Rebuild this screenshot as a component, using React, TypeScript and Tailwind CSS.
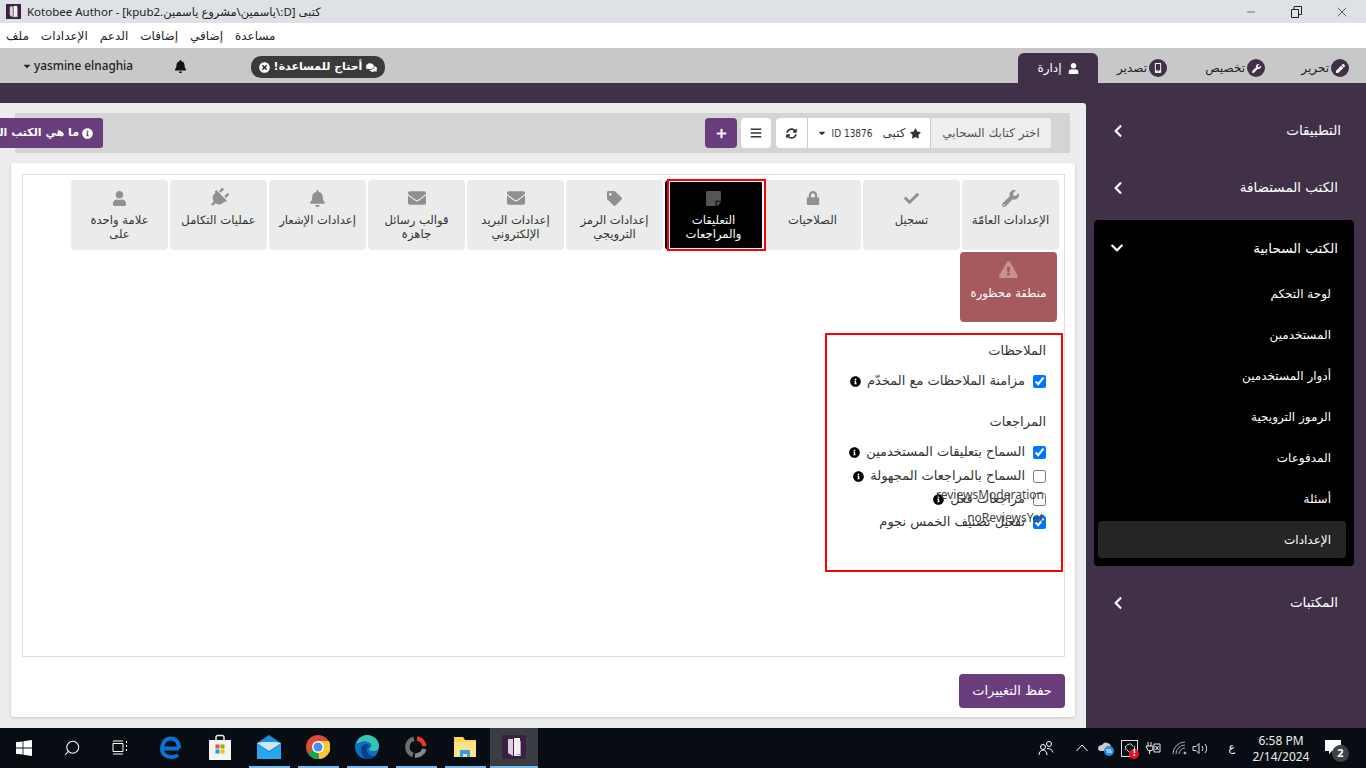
import {
  FaBars,
  FaBell,
  FaCaretDown,
  FaCheck,
  FaChevronDown,
  FaChevronLeft,
  FaComments,
  FaEnvelope,
  FaExclamationTriangle,
  FaInfoCircle,
  FaLock,
  FaMobileAlt,
  FaPen,
  FaPlug,
  FaPlus,
  FaStar,
  FaStickyNote,
  FaSyncAlt,
  FaTag,
  FaTimesCircle,
  FaUser,
  FaWrench,
} from "react-icons/fa"
import { Minus, Search, X } from "lucide-react"
import type { ReactNode } from "react"

const MENU = ["ملف", "الإعدادات", "الدعم", "إضافات", "إضافي", "مساعدة"]

const TILES: Array<{ label: ReactNode; icon: ReactNode; active?: boolean }> = [
  { label: "الإعدادات العامّة", icon: <FaWrench size={17} /> },
  { label: "تسجيل", icon: <FaCheck size={15} /> },
  { label: "الصلاحيات", icon: <FaLock size={14} /> },
  { label: "التعليقات والمراجعات", icon: <FaStickyNote size={17} />, active: true },
  { label: "إعدادات الرمز الترويجي", icon: <FaTag size={15} /> },
  { label: "إعدادات البريد الإلكتروني", icon: <FaEnvelope size={18} /> },
  { label: "قوالب رسائل جاهزة", icon: <FaEnvelope size={18} /> },
  { label: "إعدادات الإشعار", icon: <FaBell size={17} /> },
  { label: "عمليات التكامل", icon: <FaPlug size={20} className="rotate-45" /> },
  {
    label: (
      <>
        علامة واحدة
        <br />
        على
      </>
    ),
    icon: <FaUser size={15} />,
  },
]

const SUB_ITEMS = ["لوحة التحكم", "المستخدمين", "أدوار المستخدمين", "الرموز الترويجية", "المدفوعات", "أسئلة"]

function KotobeeIcon({ size }: { size: number }) {
  return (
    <svg width={size} height={size} viewBox="0 0 24 24">
      <rect width="24" height="24" fill="#3d1f45" />
      <path d="M6 4h5v17l-5-3z" fill="#d9d3dc" />
      <path d="M12 3h6v18h-6z" fill="#f3f0f4" />
      <path d="M13 19l6 2V6h-1v13z" fill="#a99bb0" />
    </svg>
  )
}

function TabIcon({ children }: { children: ReactNode }) {
  return (
    <span className="flex h-[18px] w-[18px] items-center justify-center rounded-full bg-[#403149] text-white">
      {children}
    </span>
  )
}

function HeaderTab({ label, icon }: { label: string; icon: ReactNode }) {
  return (
    <div className="flex items-center gap-[2px] text-[12px] text-[#222]">
      {icon}
      <span>{label}</span>
    </div>
  )
}

function Tile({ label, icon, active }: { label: ReactNode; icon: ReactNode; active?: boolean }) {
  return (
    <div
      className={`relative flex h-[70px] w-[97px] shrink-0 flex-col items-center rounded-[4px] px-1 pt-[8px] text-center ${
        active ? "bg-black text-white" : "bg-[#ebebeb] text-[#333]"
      }`}
    >
      {active && (
        <div className="absolute -top-[1px] -bottom-[1px] right-[-4px] left-[2px] border-2 border-[#f00] shadow-[inset_0_0_0_1px_#fff]" />
      )}
      <div className={`relative flex h-[20px] items-center ${active ? "text-[#555]" : "text-[#909090]"}`}>{icon}</div>
      <div className="relative mt-[5px] text-[11.6px] leading-[14px]">{label}</div>
    </div>
  )
}

function CheckRow({
  label,
  checked,
  info = true,
  overlay,
}: {
  label: string
  checked?: boolean
  info?: boolean
  overlay?: string
}) {
  return (
    <div className="relative flex h-[16px] items-center gap-[8px]">
      <input type="checkbox" defaultChecked={checked} className="m-0 h-[13px] w-[13px] shrink-0" />
      <span className="text-[13px] whitespace-nowrap text-[#333]">{label}</span>
      {info && <FaInfoCircle size={11} className="-mr-[2px] shrink-0 text-black" />}
      {overlay && (
        <span className="absolute top-[-3px] right-[2px] font-['Noto_Sans'] text-[12px] leading-[14px] text-[#444]">
          {overlay}
        </span>
      )}
    </div>
  )
}

function NavRow({ label, inset = "pr-[28px]" }: { label: string; inset?: string }) {
  return (
    <div className={`flex h-[57px] items-center justify-between pl-[25px] text-[13.5px] text-white ${inset}`}>
      <span>{label}</span>
      <FaChevronLeft size={14} />
    </div>
  )
}

function TaskItem({ children, running }: { children: ReactNode; running?: boolean }) {
  return (
    <div className="flex h-full w-[49px] items-center justify-center pr-[1px]">
      <div
        className={`flex h-full w-[41px] items-center justify-center border-b-2 ${
          running ? "border-[#76b9ed]" : "border-transparent"
        }`}
      >
        {children}
      </div>
    </div>
  )
}

function Taskbar() {
  return (
    <div className="flex h-[40px] shrink-0 items-center bg-[#080c13] text-white">
      <div className="flex h-full w-[48px] items-center justify-center">
        <svg width="16" height="16" viewBox="0 0 16 16" fill="#fff">
          <path d="M0 2.3l6.6-.9v6.2H0zM7.400 1.300L16 0v7.600H7.400zM0 8.400h6.600v6.200L0 13.700zM7.400 8.400H16V16l-8.600-1.200z" />
        </svg>
      </div>
      <div className="flex h-full w-[48px] items-center justify-center">
        <Search size={18} strokeWidth={1.4} className="-scale-x-100" />
      </div>
      <div className="flex h-full w-[48px] items-center justify-center">
        <svg width="16" height="16" viewBox="0 0 16 16" fill="none" stroke="#fff" strokeWidth="1">
          <path d="M1 3.500h10v8H1zM1 1h10M1 14h10M14.500 1v2M14.500 5v2M14.500 9v2" />
        </svg>
      </div>
      <div className="w-[3px]" />
      <TaskItem>
        <svg width="22" height="24" viewBox="0 0 22 24" fill="none">
          <path
            d="M2 13.500h17M19 13.500C19 7 15.500 3.500 10.500 3.500S2 8 2 13.500 6 22 11 22c3 0 5.500-.8 7-2"
            stroke="#0a74d6"
            strokeWidth="4"
          />
        </svg>
      </TaskItem>
      <TaskItem>
        <svg width="24" height="26" viewBox="0 0 24 26">
          <path d="M8 7V3.500C8 2 9 1.500 10 1.500h4c1 0 2 .5 2 2V7" fill="none" stroke="#e8e8e8" strokeWidth="1.500" />
          <path d="M1 6h22v20H1z" fill="#f4f4f4" />
          <path d="M7.500 10.500h4v4h-4z" fill="#f25022" />
          <path d="M12.500 10.500h4v4h-4z" fill="#7fba00" />
          <path d="M7.500 15.500h4v4h-4z" fill="#00a4ef" />
          <path d="M12.500 15.500h4v4h-4z" fill="#ffb900" />
        </svg>
      </TaskItem>
      <TaskItem running>
        <svg width="24" height="24" viewBox="0 0 24 24">
          <path d="M0 8L12 0l12 8v16H0z" fill="#1b8fe0" />
          <path d="M0 8l12 8 12-8-6-1H6z" fill="#cfe9fa" />
          <path d="M0 9l12 9 12-9v15H0z" fill="#29a7ee" />
        </svg>
      </TaskItem>
      <TaskItem running>
        <svg width="24" height="24" viewBox="0 0 24 24">
          <circle cx="12" cy="12" r="12" fill="#dd4b39" />
          <path d="M12 12l-10.400 6A12 12 0 0 0 13 24z" fill="#1fa349" />
          <path d="M12 6h10.900A12 12 0 0 1 13 24z" fill="#fcc934" />
          <circle cx="12" cy="12" r="6" fill="#fff" />
          <circle cx="12" cy="12" r="4.500" fill="#4a8df5" />
        </svg>
      </TaskItem>
      <TaskItem running>
        <svg width="24" height="24" viewBox="0 0 24 24">
          <circle cx="12" cy="12" r="12" fill="#0f6fc4" />
          <path d="M1 9C3 3 8 0 12 0c7 0 12 5 12 11 0 4-3 5-6 5-2 0-4-1-4-2 2-1 3-3 2-5-2-3-8-4-12-1-1 0-2 0-3 1z" fill="#36c6b0" />
          <path d="M6 14c0-3 3-5 6-5 1 0 2 1 2 3 0 0-2 0-2 3 0 3 3 6 7 6-2 2-4 3-7 3-3 0-6-4-6-10z" fill="#0a3f8c" />
        </svg>
      </TaskItem>
      <TaskItem running>
        <svg width="24" height="24" viewBox="0 0 24 24" fill="none" strokeWidth="4.500">
          <path d="M10 3.700A8.500 8.500 0 0 0 9 20" stroke="#6f6f6f" />
          <path d="M11 20.400A8.500 8.500 0 0 0 20.300 14" stroke="#8a8a8a" />
          <path d="M13 3.600A8.500 8.500 0 0 1 20.400 11" stroke="#e8392b" />
        </svg>
      </TaskItem>
      <TaskItem running>
        <svg width="24" height="22" viewBox="0 0 24 22">
          <path d="M1 1h9l2 3h11v17H1z" fill="#fbd55c" />
          <path d="M1 6h22v15H1z" fill="#fee28a" />
          <path d="M7 14h10v7h-3v-3h-4v3H7z" fill="#2f9fe6" />
        </svg>
      </TaskItem>
      <div className="flex h-full w-[48px] items-center justify-center border-b-2 border-[#76b9ed] bg-[#3a3d42]">
        <KotobeeIcon size={24} />
      </div>

      <div className="flex-1" />

      <div className="flex h-full items-center">
        <svg width="16" height="16" viewBox="0 0 16 16" fill="none" stroke="#fff" className="mr-[22px]">
          <circle cx="5" cy="7" r="2.500" />
          <circle cx="11" cy="4" r="2.500" />
          <path d="M1 15c0-3 2-5 4-5s4 2 4 5M9 8.500c3 0 5 1 6 4" />
        </svg>
        <svg width="12" height="8" viewBox="0 0 12 8" fill="none" stroke="#fff" className="mr-[9px]">
          <path d="M.5 7L6 1l5.500 6" />
        </svg>
        <svg width="18" height="16" viewBox="0 0 18 16" className="mr-[6px]">
          <path d="M1 9a4 4 0 0 1 4-4 5 5 0 0 1 9 1v5H3a3 3 0 0 1-2-2z" fill="#c9ccd1" />
          <circle cx="12" cy="11" r="5" fill="#2f8de0" />
          <path d="M9 10h5M15 12h-5" stroke="#fff" />
        </svg>
        <div className="relative mr-[7px] flex h-[17px] w-[17px] items-center justify-center border border-[#ddd]">
          <svg width="10" height="10" viewBox="0 0 10 10" fill="none" stroke="#ddd">
            <path d="M1 7a4 4 0 0 1 7-4M9 3a4 4 0 0 1-7 4" />
          </svg>
          <div className="absolute right-[-2px] bottom-[-3px] flex h-[10px] w-[10px] items-center justify-center rounded-full bg-[#e81123] text-[8px] leading-none font-bold text-white">
            !
          </div>
        </div>
        <svg width="16" height="12" viewBox="0 0 16 12" fill="none" stroke="#eee" className="mr-[11px]">
          <path d="M3 0v4M6 0v4M1 4h7v2a3 3 0 0 1-6 0zM4.500 9v3M9 2h6v8H9zM10.500 4l3 4M13.500 4l-3 4" />
        </svg>
        <svg width="16" height="14" viewBox="0 0 16 14" fill="none" stroke="#aaa" className="mr-[4px]">
          <path d="M1 13A12 12 0 0 1 13 1M4 13a9 9 0 0 1 9-9M7 13a6 6 0 0 1 6-6" />
          <circle cx="13" cy="12" r="1" fill="#fff" />
        </svg>
        <svg width="17" height="13" viewBox="0 0 17 13" fill="none" stroke="#ddd" className="mr-[19px]">
          <path d="M1 4.500h3l3-3v10l-3-3H1zM10 4a4 4 0 0 1 0 5M13 2a7 7 0 0 1 0 9" />
        </svg>
        <span className="mr-[17px] font-['DejaVu_Sans'] text-[11px]">ع</span>
        <div className="mt-[1px] mr-[15px] w-[58px] text-center font-['Noto_Sans'] text-[12px] leading-[16px] whitespace-nowrap text-[#eee]">
          <div>6:58 PM</div>
          <div>2/14/2024</div>
        </div>
        <div className="relative mr-[25px] h-[16px] w-[16px]">
          <svg width="16" height="16" viewBox="0 0 16 16" fill="#fff">
            <path d="M0 0h16v11H7l-3 3v-3H0z" />
          </svg>
          <div className="absolute top-[5px] left-[7px] flex h-[17px] w-[17px] items-center justify-center rounded-full bg-[#404245] font-['Noto_Sans'] text-[11px] font-bold text-white">
            2
          </div>
        </div>
      </div>
    </div>
  )
}

export default function App() {
  return (
    <div className="flex h-[768px] w-[1366px] flex-col overflow-hidden bg-[#403149] font-['DejaVu_Sans',sans-serif]">
      {/* window chrome */}
      <div className="flex h-[23px] shrink-0 items-center bg-[#dee1e6] pl-[6px] text-[#222]">
        <KotobeeIcon size={15} />
        <span dir="rtl" className="ml-[6px] font-['Noto_Sans','DejaVu_Sans',sans-serif] text-[11.5px]">
          كتبى [D:\ياسمين\مشروع ياسمين.kpub2] - Kotobee Author
        </span>
        <div className="flex-1" />
        <Minus size={12} strokeWidth={1.2} className="mr-[34px]" />
        <svg width="11" height="12" viewBox="0 0 11 12" fill="none" stroke="#222" className="mr-[32px]">
          <path d="M.5 3.500h7v8h-7zM3 3.500v-3h7.500v8h-3" />
        </svg>
        <X size={16} strokeWidth={1} className="mr-[16px]" />
      </div>
      <div className="flex h-[25px] shrink-0 items-center gap-[12px] bg-white pl-[6px] font-['Noto_Sans','DejaVu_Sans',sans-serif] text-[12px] text-[#222]">
        {MENU.map((item) => (
          <span key={item} dir="rtl">
            {item}
          </span>
        ))}
      </div>

      {/* app header */}
      <div className="flex h-[35px] shrink-0 items-center bg-[#c8c8c8] pl-[22px]">
        <div className="flex w-[111px] items-center gap-[2px] text-[#222]">
          <FaCaretDown size={10} className="shrink-0" />
          <span className="font-['Noto_Sans'] text-[11.8px] font-medium whitespace-nowrap">yasmine elnaghia</span>
        </div>
        <FaBell size={13} className="mt-[1px] ml-[41px] text-[#111]" />
        <div className="mt-[3px] ml-[64px] flex h-[22px] w-[134px] items-center justify-center gap-[4px] rounded-[10px] bg-[#3a3a3a] text-[11px] font-bold text-white">
          <FaTimesCircle size={11} />
          <span dir="rtl">أحتاج للمساعدة!</span>
          <FaComments size={11} />
        </div>
        <div className="flex-1" />
        <div dir="rtl" className="flex h-full items-end">
          <div className="mr-[17px] flex h-[30px] w-[47px] items-center">
            <HeaderTab label="تحرير" icon={<TabIcon><FaPen size={9} /></TabIcon>} />
          </div>
          <div className="mr-[37px] flex h-[30px] w-[61px] items-center">
            <HeaderTab label="تخصيص" icon={<TabIcon><FaWrench size={9} /></TabIcon>} />
          </div>
          <div className="mr-[37px] flex h-[30px] w-[49px] items-center">
            <HeaderTab label="تصدير" icon={<TabIcon><FaMobileAlt size={10} /></TabIcon>} />
          </div>
          <div className="mr-[20px] flex h-[30px] w-[80px] items-center justify-center gap-[6px] rounded-t-[6px] bg-[#403149] text-[12px] text-white">
            <FaUser size={11} />
            <span>إدارة</span>
          </div>
        </div>
      </div>

      {/* body */}
      <div className="flex min-h-0 flex-1">
        <div className="mt-[20px] flex w-[1086px] shrink-0 flex-col rounded-tr-[3px] bg-[#ededed] pt-[10px]">
          <div className="mr-[16px] ml-[15px] flex h-[40px] shrink-0 items-center bg-[#d4d4d4] pr-[19px]" dir="rtl">
            <div className="flex h-[30px] w-[275px] overflow-hidden rounded-[4px] bg-white text-[12px] text-[#333]">
              <div className="flex w-[121px] items-center justify-center border-l border-[#ccc] bg-[#eeeeee] whitespace-nowrap text-[#555]">
                اختر كتابك السحابي
              </div>
              <div className="flex w-[123px] items-center justify-center gap-[4px] border-l border-[#ccc]">
                <FaStar size={11} />
                <span className="ml-[6px]">كتبى</span>
                <span dir="ltr" className="font-['DejaVu_Sans_Condensed','DejaVu_Sans'] text-[10px]">
                  ID 13876
                </span>
                <FaCaretDown size={10} />
              </div>
              <div className="flex flex-1 items-center justify-center">
                <FaSyncAlt size={11} />
              </div>
            </div>
            <div className="mr-[5px] flex h-[30px] w-[30px] items-center justify-center rounded-[4px] bg-white text-[#333]">
              <FaBars size={12} />
            </div>
            <div className="mr-[4px] flex h-[30px] w-[32px] items-center justify-center rounded-[4px] bg-[#6a3e7c] text-white">
              <FaPlus size={11} />
            </div>
            <div className="flex-1" />
            <div className="-ml-[52px] flex h-[30px] w-[140px] shrink-0 items-center gap-[3px] overflow-hidden rounded-[3px] bg-[#6a3e7c] pr-[10px] text-[11px] font-bold whitespace-nowrap text-white">
              <FaInfoCircle size={11} className="shrink-0" />
              <span>ما هي الكتب السحابية؟</span>
            </div>
          </div>

          <div className="mt-[10px] mr-[11px] ml-[11px] flex flex-1 flex-col rounded-[3px] bg-white pt-[11px] pr-[10px] pl-[11px] shadow-[0_1px_3px_rgba(0,0,0,0.18)]">
            <div dir="rtl" className="h-[483px] shrink-0 border border-[#dcdcdc] pt-[5px] pr-[5px]">
              <div className="flex gap-[2px]">
                {TILES.map((tile, i) => (
                  <Tile key={i} label={tile.label} icon={tile.icon} active={tile.active} />
                ))}
              </div>
              <div className="mt-[2px] mr-[2px] flex h-[70px] w-[97px] flex-col items-center rounded-[4px] bg-[#a65a5e] pt-[8px] text-white">
                <FaExclamationTriangle size={19} className="text-[#c98f92]" />
                <div className="mt-[6px] text-[11.6px]">منطقة محظورة</div>
              </div>
              <div className="mt-[11px] -mr-[4px] h-[239px] w-[238px] border-2 border-[#f00] pt-[8px] pr-[15px]">
                <div className="h-[16px] text-[13px] leading-[16px] text-[#333]">الملاحظات</div>
                <div className="mt-[14px]">
                  <CheckRow label="مزامنة الملاحظات مع المخدّم" checked />
                </div>
                <div className="mt-[25px] h-[16px] text-[13px] leading-[16px] text-[#333]">المراجعات</div>
                <div className="mt-[14px]">
                  <CheckRow label="السماح بتعليقات المستخدمين" checked />
                </div>
                <div className="mt-[8px]">
                  <CheckRow label="السماح بالمراجعات المجهولة" />
                </div>
                <div className="mt-[7px]">
                  <CheckRow label="مراجعات فعل" overlay="reviewsModeration" />
                </div>
                <div className="mt-[7px]">
                  <CheckRow label="تفعيل تصنيف الخمس نجوم" checked info={false} overlay="noReviewsYet" />
                </div>
              </div>
            </div>
            <div dir="rtl" className="mt-[17px] flex">
              <div className="flex h-[34px] w-[106px] items-center justify-center rounded-[4px] bg-[#6a3e7c] text-[13px] text-white">
                حفظ التغييرات
              </div>
            </div>
          </div>
          <div className="h-[11px] shrink-0" />
        </div>

        {/* sidebar */}
        <div dir="rtl" className="flex-1 pt-[19px]">
          <NavRow label="التطبيقات" inset="pr-[25px]" />
          <NavRow label="الكتب المستضافة" />
          <div className="mt-[4px] mr-[12px] ml-[8px] h-[346px] rounded-[4px] bg-black text-white">
            <div className="flex h-[56px] items-center justify-between pr-[16px] pl-[16px] text-[13.5px]">
              <span>الكتب السحابية</span>
              <FaChevronDown size={14} />
            </div>
            <div className="-mt-[3px]">
              {SUB_ITEMS.map((item) => (
                <div key={item} className="flex h-[41px] items-center pr-[23px] text-[12px]">
                  {item}
                </div>
              ))}
            </div>
            <div className="mt-[2px] mr-[8px] ml-[4px] flex h-[37px] items-center rounded-[4px] bg-[#252525] pr-[15px] text-[12px]">
              الإعدادات
            </div>
          </div>
          <div className="mt-[8px]">
            <NavRow label="المكتبات" />
          </div>
        </div>
      </div>

      <Taskbar />
    </div>
  )
}
